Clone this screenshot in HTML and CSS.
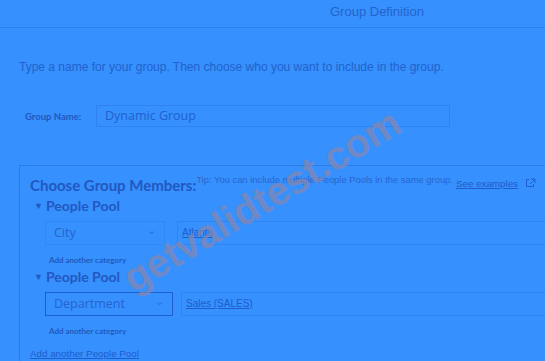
FILE: index.html
```html
<!DOCTYPE html>
<html lang="en">
<head>
    <meta charset="UTF-8" />
    <meta name="viewport" content="width=device-width, initial-scale=1" />
    <title>Group Definition</title>
    <link rel="stylesheet" href="styles.css">
</head>
<body>
    <header class="title-bar">Group Definition</header>

    <main class="content">
        <p class="intro">Type a name for your group. Then choose who you want to include in the group.</p>

        <div class="name-row">
            <label for="groupName">Group Name:</label>
            <div class="name-input" id="groupName">Dynamic Group</div>
        </div>

        <section class="members">
            <div class="members-head">
                <h2>Choose Group Members:</h2>
                <span class="tip">Tip: You can include multiple People Pools in the same group.</span>
                <a class="examples" href="#">See examples</a>
                <svg class="ext-icon" width="11" height="10" viewBox="0 0 11 10">
                    <path d="M4 1.5H1.5v7h7V6" fill="none" stroke="currentColor" stroke-width="1"/>
                    <path d="M6 1h4v4M10 1L5 6" fill="none" stroke="currentColor" stroke-width="1"/>
                </svg>
            </div>

            <div class="pool">
                <h3><span class="caret">&#9660;</span>People Pool</h3>
                <div class="criteria">
                    <div class="select">City<span class="chev">&#8964;</span></div>
                    <div class="value"><a href="#">Atlanta</a></div>
                </div>
                <a class="add-cat" href="#">Add another category</a>
            </div>

            <div class="pool">
                <h3><span class="caret">&#9660;</span>People Pool</h3>
                <div class="criteria">
                    <div class="select focused">Department<span class="chev">&#8964;</span></div>
                    <div class="value"><a href="#">Sales (SALES)</a></div>
                </div>
                <a class="add-cat" href="#">Add another category</a>
            </div>

            <a class="add-pool" href="#">Add another People Pool</a>
        </section>
    </main>

    <div class="watermark">getvalidtest.com</div>
</body>
</html>
```

FILE: styles.css
```css
html, body {
    margin: 0;
    padding: 0;
    width: 545px;
    height: 361px;
    overflow: hidden;
    background: #3690fd;
    color: #2566cf;
    font-family: "Liberation Sans", Arial, sans-serif;
}
a {
    color: #1f5ccc;
}
.title-bar {
    height: 27px;
    line-height: 24px;
    padding-left: 330px;
    font-size: 13px;
    color: #2463cc;
    border-bottom: 1px solid #2d80ec;
}
.content {
    padding: 0 19px;
}
.intro {
    margin: 31px 0 0;
    font-size: 12px;
    line-height: 16px;
    color: #2262cc;
}
.name-row {
    display: flex;
    align-items: center;
    margin-top: 30px;
    padding-left: 6px;
}
.name-row label {
    width: 71px;
    font-family: Lato, sans-serif;
    font-weight: bold;
    font-size: 9.5px;
    color: #2158c0;
}
.name-input {
    width: 344px;
    height: 20px;
    line-height: 20px;
    padding-left: 8px;
    border: 1px solid #2f82ef;
    font-family: "Open Sans", sans-serif;
    font-size: 12.5px;
    color: #2260cc;
}
.members {
    margin-top: 38px;
    width: 526px;
    height: 196px;
    border: 1px solid #2b7ce6;
    border-right: none;
    border-bottom: none;
    padding: 8px 0 0 10px;
    box-sizing: border-box;
}
.members-head {
    display: flex;
    align-items: flex-start;
}
.members-head h2 {
    margin: 2px 0 0;
    font-family: Lato, sans-serif;
    font-size: 15px;
    color: #2258c2;
}
.tip {
    font-size: 9.4px;
    margin-top: 0;
    color: #2866cf;
}
.examples {
    font-size: 9.8px;
    margin: 4px 0 0 3px;
}
.ext-icon {
    margin: 4px 0 0 7px;
    color: #1f5ccc;
}
.pool h3 {
    margin: 3px 0 0 4px;
    font-family: Lato, sans-serif;
    font-size: 14px;
    line-height: 18px;
    color: #2258c2;
    display: flex;
    align-items: center;
}
.caret {
    font-size: 9px;
    margin-right: 3px;
}
.criteria {
    display: flex;
    margin-top: 6px;
    margin-left: 15px;
}
.select {
    width: 110px;
    height: 22px;
    line-height: 22px;
    padding-left: 8px;
    position: relative;
    border: 1px solid #3188f4;
    font-family: "Open Sans", sans-serif;
    font-size: 12.5px;
    color: #2464cd;
}
.select.focused {
    border-color: #1f5ecc;
    width: 118px;
}
.chev {
    position: absolute;
    right: 8px;
    top: -3px;
    font-size: 11px;
    color: #2a6fd8;
}
.value {
    flex: 1;
    margin-left: 8px;
    height: 22px;
    line-height: 22px;
    padding-left: 4px;
    border: 1px solid #2f84f0;
    border-right: none;
    font-size: 10px;
}
.criteria .select:not(.focused) + .value {
    margin-left: 12px;
}
.add-cat {
    display: block;
    margin: 10px 0 0 19px;
    font-family: Lato, sans-serif;
    font-weight: bold;
    font-size: 8px;
    color: #2158c0;
    text-decoration: none;
}
.add-pool {
    display: block;
    margin-top: 12px;
    font-size: 9.8px;
}
.watermark {
    position: absolute;
    left: 104px;
    top: 178px;
    transform: rotate(-31deg);
    font-family: "Liberation Sans", Arial, sans-serif;
    font-weight: bold;
    font-size: 40px;
    color: rgba(135, 135, 175, 0.72);
    white-space: nowrap;
}
```
